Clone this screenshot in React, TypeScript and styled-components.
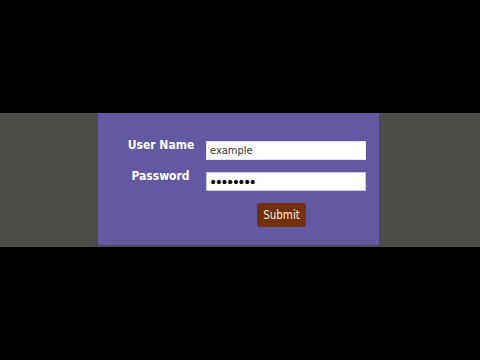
import React from "react";
import styled, { createGlobalStyle } from "styled-components";

const Global = createGlobalStyle`
  html, body { margin: 0; padding: 0; background: #000; }
  body { width: 480px; height: 360px; overflow: hidden; }
`;

const Page = styled.div`
  display: flex;
  flex-direction: column;
  height: 360px;
  background: #000;
  padding-top: 113px;
  box-sizing: border-box;
`;

const Band = styled.div`
  height: 134px;
  background: #4b4d48;
  display: flex;
  align-items: flex-start;
  padding-left: 98px;
`;

const Panel = styled.form`
  width: 281px;
  height: 132px;
  background: #6358a2;
  box-sizing: border-box;
  padding: 25px 0 0 18px;
  display: grid;
  grid-template-columns: 89px 160px;
  grid-template-rows: 31px 34px auto;
  column-gap: 1px;
  align-content: start;
  margin: 0;
`;

const Label = styled.label<{ $shift?: number }>`
  font-family: "DejaVu Sans Condensed", "DejaVu Sans", Verdana, sans-serif;
  font-weight: bold;
  font-size: 12px;
  line-height: 15px;
  color: #fff;
  text-align: center;
  padding-left: ${(p) => p.$shift ?? 0}px;
`;

const Input = styled.input<{ $focus?: boolean }>`
  box-sizing: border-box;
  width: 160px;
  height: 19px;
  margin: 3px 0 0 0;
  padding: 0 3px;
  border: 1px solid ${(p) => (p.$focus ? "#c3c8f4" : "#e6e6ee")};
  background: #fff;
  outline: none;
  font-family: "DejaVu Sans Condensed", "DejaVu Sans", Verdana, sans-serif;
  font-size: 11px;
  color: #333;
`;

const PasswordInput = styled(Input)`
  font-family: "DejaVu Sans", Verdana, sans-serif;
  font-size: 14px;
  letter-spacing: -2.6px;
  color: #000;
  padding-left: 2px;
`;

const ButtonCell = styled.div`
  grid-column: 2;
  display: flex;
`;

const Submit = styled.button`
  margin-left: 51px;
  width: 49px;
  height: 24px;
  padding: 0;
  border: none;
  border-radius: 3px;
  background: #73300f;
  color: #f8ebdc;
  font-family: "DejaVu Sans Condensed", "DejaVu Sans", Verdana, sans-serif;
  font-size: 11.5px;
  cursor: pointer;
`;

export default function App() {
  return (
    <>
      <Global />
      <Page>
        <Band>
          <Panel onSubmit={(e) => e.preventDefault()}>
            <Label htmlFor="u" $shift={1}>User Name</Label>
            <Input id="u" type="text" defaultValue="example" />
            <Label htmlFor="p">Password</Label>
            <PasswordInput id="p" type="password" defaultValue="password" $focus />
            <ButtonCell>
              <Submit type="submit">Submit</Submit>
            </ButtonCell>
          </Panel>
        </Band>
      </Page>
    </>
  );
}
